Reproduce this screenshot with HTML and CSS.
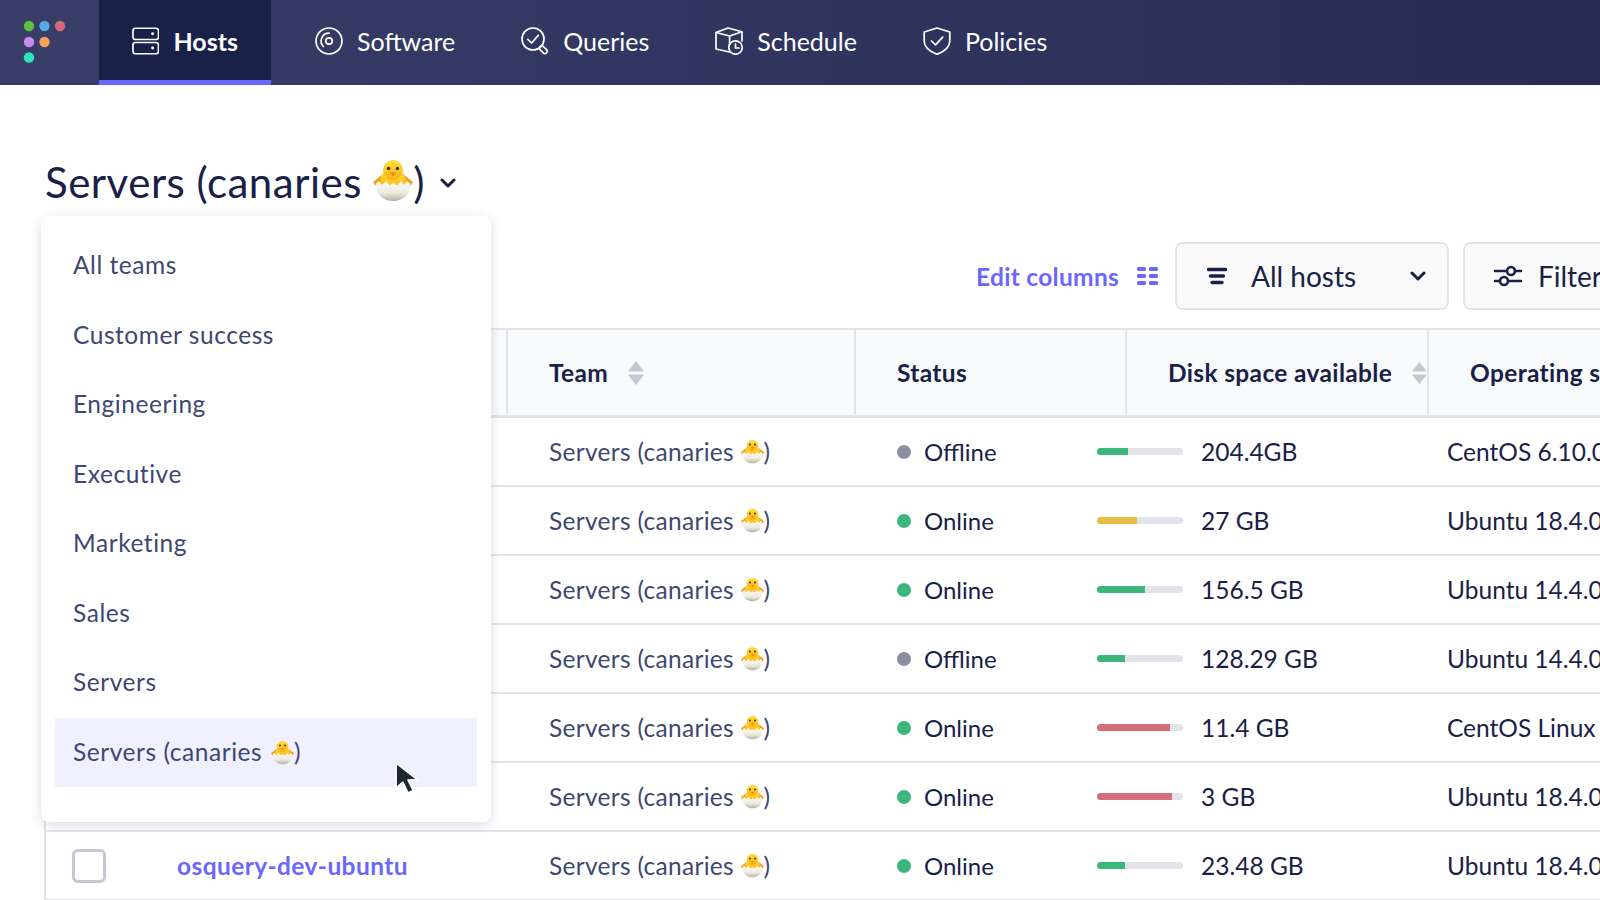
FILE: index.html
```html
<!DOCTYPE html>
<html lang="en">
<head>
  <meta charset="UTF-8" />
  <title>Manage hosts | Fleet</title>
  <link rel="stylesheet" href="styles.css">
</head>
<body>

<!-- shared emoji, used in title, menu and team column -->
<svg class="sprite" aria-hidden="true">
  <defs>
    <linearGradient id="eggShade" x1="0" y1="0" x2="0" y2="1">
      <stop offset="0" stop-color="#fdfcf6"/>
      <stop offset="0.6" stop-color="#ece9df"/>
      <stop offset="1" stop-color="#b5b0a0"/>
    </linearGradient>
    <linearGradient id="chickShade" x1="0" y1="0" x2="0" y2="1">
      <stop offset="0" stop-color="#ffe040"/>
      <stop offset="1" stop-color="#fcb10f"/>
    </linearGradient>
  </defs>
  <symbol id="chick" viewBox="0 0 40 41">
    <path d="M10 14 L0 22 L2.5 25.5 L11 27Z" fill="#f5a016"/>
    <path d="M30 14 L40 22 L37.5 25.5 L29 27Z" fill="#f5a016"/>
    <ellipse cx="20" cy="20" rx="12.5" ry="11" fill="url(#chickShade)"/>
    <circle cx="20" cy="10" r="10" fill="url(#chickShade)"/>
    <circle cx="15.6" cy="8.5" r="1.7" fill="#3a3028"/>
    <circle cx="24.4" cy="8.5" r="1.7" fill="#3a3028"/>
    <path d="M17 12.5 L23 12.5 L20 16.5Z" fill="#ef7d18"/>
    <path d="M3 23.5 L6 21 L9 25 L13 21 L17 25.5 L20 23 L24 25.5 L28 21 L31 25 L34 21 L37 23.5 C38 34 30 41 20 41 C10 41 2 34 3 23.5Z" fill="url(#eggShade)"/>
  </symbol>
</svg>

<nav class="topnav">
  <div class="logo">
    <svg width="54" height="52" viewBox="0 0 54 52">
      <circle cx="11" cy="9" r="5.2" fill="#5cc23d"/>
      <circle cx="26.5" cy="9" r="5.2" fill="#55a8e2"/>
      <circle cx="42" cy="9" r="5.2" fill="#d4697a"/>
      <circle cx="11" cy="25" r="5.2" fill="#c68cf0"/>
      <circle cx="26.5" cy="25" r="5.2" fill="#f8a05c"/>
      <circle cx="11" cy="40.5" r="5.2" fill="#2fe3bf"/>
    </svg>
  </div>
  <a class="nav-item active" href="#">
    <svg class="nav-icon" viewBox="0 0 28 28">
      <rect x="1" y="1" width="26" height="11.5" rx="2.5"/>
      <rect x="1" y="15.5" width="26" height="11.5" rx="2.5"/>
      <circle class="solid" cx="21" cy="6.7" r="1.5"/>
      <circle class="solid" cx="21" cy="21.2" r="1.5"/>
    </svg>
    Hosts
  </a>
  <a class="nav-item" href="#">
    <svg class="nav-icon" viewBox="0 0 28 28">
      <circle cx="14" cy="14" r="13"/>
      <circle cx="14" cy="14" r="3.2"/>
      <path d="M8.4 19.5 A7.8 7.8 0 0 1 14 6.2"/>
    </svg>
    Software
  </a>
  <a class="nav-item" href="#">
    <svg class="nav-icon" viewBox="0 0 28 28">
      <circle cx="12" cy="12" r="11"/>
      <path d="M6.8 12.3 L10.6 16 L17.3 8.4"/>
      <rect x="20" y="18.2" width="4.6" height="9" rx="2.3" transform="rotate(-45 22.3 22.7)"/>
    </svg>
    Queries
  </a>
  <a class="nav-item" href="#">
    <svg class="nav-icon" viewBox="0 0 28 28">
      <path d="M14.6 25 L1 22 V5.5 L13 1 L27 4.8 V14"/>
      <path d="M1 5.5 L14.6 9 L27 4.8 M14.6 9 V17"/>
      <circle cx="20.5" cy="20.5" r="6.7"/>
      <path d="M20.5 17 V21 H24"/>
    </svg>
    Schedule
  </a>
  <a class="nav-item" href="#">
    <svg class="nav-icon" viewBox="0 0 28 28">
      <path d="M14 1 L26.8 5 V14 C26.8 21 20 25 14 27.4 C8 25 1.2 21 1.2 14 V5Z"/>
      <path d="M8.5 14 L12.5 17.8 L19.7 10.2"/>
    </svg>
    Policies
  </a>
</nav>

<main class="page">
  <div class="team-picker">
    <h1 class="team-title">Servers (canaries <svg class="chick chick-lg"><use href="#chick"/></svg>)<svg class="title-caret" viewBox="0 0 16 11"><path d="M2 2 L8 8 L14 2"/></svg></h1>

    <ul class="team-menu">
      <li>All teams</li>
      <li>Customer success</li>
      <li>Engineering</li>
      <li>Executive</li>
      <li>Marketing</li>
      <li>Sales</li>
      <li>Servers</li>
      <li class="selected">
        Servers (canaries <svg class="chick"><use href="#chick"/></svg>)
        <svg class="cursor" viewBox="0 0 28 34">
          <path d="M3 2 L3 26 L9.5 20.5 L14.5 31 L19.5 28.5 L14.5 18.5 L23.5 18Z"/>
        </svg>
      </li>
    </ul>
  </div>

  <div class="toolbar">
    <a class="edit-columns" href="#">
      Edit columns
      <svg width="21" height="18" viewBox="0 0 21 18">
        <rect x="0" y="0" width="9" height="4" rx="1.5"/><rect x="12" y="0" width="9" height="4" rx="1.5"/>
        <rect x="0" y="7" width="9" height="4" rx="1.5"/><rect x="12" y="7" width="9" height="4" rx="1.5"/>
        <rect x="0" y="14" width="9" height="4" rx="1.5"/><rect x="12" y="14" width="9" height="4" rx="1.5"/>
      </svg>
    </a>
    <div class="tool-btn hosts-select">
      <svg class="tool-icon" viewBox="0 0 20 18">
        <path d="M1.5 2.5 H18.5 M3.5 9 H16.5 M5 15.5 H15"/>
      </svg>
      <span>All hosts</span>
      <svg class="select-caret" viewBox="0 0 16 11"><path d="M2 2 L8 8 L14 2"/></svg>
    </div>
    <div class="tool-btn filter-btn">
      <svg class="tool-icon sliders" viewBox="0 0 28 22">
        <path d="M1 6 H13 M21 6 H27 M1 16 H6 M14 16 H27"/>
        <circle cx="17" cy="6" r="4"/><circle cx="10" cy="16" r="4"/>
      </svg>
      <span>Filter</span>
    </div>
  </div>

  <div class="hosts-table">
    <div class="table-head">
      <div class="th"></div>
      <div class="th">Team <svg class="sort" viewBox="0 0 16 24"><path d="M8 0 L16 10.5 H0Z M0 13.5 H16 L8 24Z"/></svg></div>
      <div class="th">Status</div>
      <div class="th">Disk space available <svg class="sort" viewBox="0 0 16 24"><path d="M8 0 L16 10.5 H0Z M0 13.5 H16 L8 24Z"/></svg></div>
      <div class="th">Operating system</div>
    </div>

    <div class="row">
      <div class="cell"></div>
      <div class="cell team">Servers (canaries <svg class="chick"><use href="#chick"/></svg>)</div>
      <div class="cell status"><i class="dot offline"></i>Offline</div>
      <div class="cell disk"><div class="bar"><div class="fill green" style="width:36%"></div></div>204.4GB</div>
      <div class="cell">CentOS 6.10.0</div>
    </div>
    <div class="row">
      <div class="cell"></div>
      <div class="cell team">Servers (canaries <svg class="chick"><use href="#chick"/></svg>)</div>
      <div class="cell status"><i class="dot online"></i>Online</div>
      <div class="cell disk"><div class="bar"><div class="fill yellow" style="width:46%"></div></div>27 GB</div>
      <div class="cell">Ubuntu 18.4.0</div>
    </div>
    <div class="row">
      <div class="cell"></div>
      <div class="cell team">Servers (canaries <svg class="chick"><use href="#chick"/></svg>)</div>
      <div class="cell status"><i class="dot online"></i>Online</div>
      <div class="cell disk"><div class="bar"><div class="fill green" style="width:56%"></div></div>156.5 GB</div>
      <div class="cell">Ubuntu 14.4.0</div>
    </div>
    <div class="row">
      <div class="cell"></div>
      <div class="cell team">Servers (canaries <svg class="chick"><use href="#chick"/></svg>)</div>
      <div class="cell status"><i class="dot offline"></i>Offline</div>
      <div class="cell disk"><div class="bar"><div class="fill green" style="width:33%"></div></div>128.29 GB</div>
      <div class="cell">Ubuntu 14.4.0</div>
    </div>
    <div class="row">
      <div class="cell"></div>
      <div class="cell team">Servers (canaries <svg class="chick"><use href="#chick"/></svg>)</div>
      <div class="cell status"><i class="dot online"></i>Online</div>
      <div class="cell disk"><div class="bar"><div class="fill red" style="width:85%"></div></div>11.4 GB</div>
      <div class="cell">CentOS Linux 7</div>
    </div>
    <div class="row">
      <div class="cell"></div>
      <div class="cell team">Servers (canaries <svg class="chick"><use href="#chick"/></svg>)</div>
      <div class="cell status"><i class="dot online"></i>Online</div>
      <div class="cell disk"><div class="bar"><div class="fill red" style="width:87%"></div></div>3 GB</div>
      <div class="cell">Ubuntu 18.4.0</div>
    </div>
    <div class="row">
      <div class="cell host"><span class="checkbox"></span><a href="#">osquery-dev-ubuntu</a></div>
      <div class="cell team">Servers (canaries <svg class="chick"><use href="#chick"/></svg>)</div>
      <div class="cell status"><i class="dot online"></i>Online</div>
      <div class="cell disk"><div class="bar"><div class="fill green" style="width:33%"></div></div>23.48 GB</div>
      <div class="cell">Ubuntu 18.4.0</div>
    </div>
  </div>
</main>

</body>
</html>
```

FILE: styles.css
```css
* {
  box-sizing: border-box;
}

html, body {
  height: 100%;
}

body {
  margin: 0;
  overflow: hidden;
  background: #fff;
  color: #192147;
  font-family: 'Lato', 'Noto Sans', sans-serif;
}

.sprite {
  position: absolute;
  width: 0;
  height: 0;
}

/* top navigation */
.topnav {
  display: flex;
  height: 85px;
  background: linear-gradient(90deg, #383e68, #282c55);
}

.logo {
  width: 99px;
  padding: 17px 0 0 18px;
}

.nav-item {
  display: flex;
  align-items: center;
  gap: 14px;
  padding: 0 33px 3px;
  color: #fff;
  font-size: 25px;
  text-decoration: none;
}

.nav-item.active {
  width: 172px;
  margin-right: 11px;
  padding-top: 2px;
  padding-bottom: 0;
  background: #1a2149;
  border-bottom: 5px solid #6a67fe;
  font-weight: 700;
}

.nav-icon {
  width: 28px;
  height: 28px;
  fill: none;
  stroke: #fff;
  stroke-width: 1.7;
  stroke-linecap: round;
  stroke-linejoin: round;
}

.nav-icon .solid {
  fill: #fff;
  stroke: none;
}

/* page */
.page {
  padding: 67px 0 0 44px;
}

.team-picker {
  position: relative;
}

.team-title {
  height: 60px;
  margin: 0;
  padding-left: 1px;
  font-size: 42px;
  font-weight: 400;
  line-height: 60px;
  letter-spacing: 0.5px;
  white-space: nowrap;
}

.chick {
  display: inline-block;
  width: 23px;
  height: 25px;
  vertical-align: -4px;
}

.chick-lg {
  width: 40px;
  height: 41px;
  vertical-align: -3px;
}

.title-caret {
  width: 16px;
  height: 11px;
  margin-left: 15px;
  vertical-align: 9px;
  fill: none;
  stroke: #192147;
  stroke-width: 3;
  stroke-linecap: round;
  stroke-linejoin: round;
}

/* team dropdown */
.team-menu {
  position: absolute;
  top: 64px;
  left: -3px;
  z-index: 5;
  width: 450px;
  margin: 0;
  padding: 15px 14px 35px;
  list-style: none;
  background: #fff;
  border-radius: 8px;
  box-shadow: 0 3px 12px rgba(25, 33, 71, 0.16);
}

.team-menu li {
  position: relative;
  height: 69.5px;
  padding-left: 18px;
  color: #3e4771;
  font-size: 24.5px;
  line-height: 67px;
  letter-spacing: 0.55px;
}

.team-menu li.selected {
  background: #f1f0ff;
}

.team-menu .chick {
  margin-left: 2px;
}

.cursor {
  position: absolute;
  top: 43px;
  left: 338px;
  width: 29px;
  height: 35px;
  fill: #1c2733;
  stroke: #fff;
  stroke-width: 1.5;
  stroke-linejoin: round;
}

/* toolbar above the table */
.toolbar {
  display: flex;
  align-items: center;
  height: 68px;
  margin-top: 30px;
  margin-bottom: 18px;
  padding-left: 932px;
  width: 1800px;
}

.edit-columns {
  display: flex;
  align-items: center;
  gap: 18px;
  width: 199px;
  color: #6a67fe;
  fill: #6a67fe;
  font-size: 24.5px;
  font-weight: 700;
  letter-spacing: 0.3px;
  text-decoration: none;
}

.tool-btn {
  display: flex;
  align-items: center;
  height: 68px;
  background: #fafafb;
  border: 2px solid #e2e4ea;
  border-radius: 8px;
  font-size: 28px;
}

.hosts-select {
  width: 274px;
  margin-right: 14px;
  padding-left: 30px;
}

.filter-btn {
  width: 230px;
  padding-left: 29px;
}

.tool-icon {
  flex: none;
  width: 20px;
  height: 18px;
  margin-right: 24px;
  fill: none;
  stroke: #192147;
  stroke-width: 3.4;
  stroke-linecap: round;
}

.tool-icon.sliders {
  width: 28px;
  height: 22px;
  margin-right: 16px;
  stroke-width: 2.6;
}

.select-caret {
  width: 16px;
  height: 11px;
  margin-left: auto;
  margin-right: 21px;
  fill: none;
  stroke: #192147;
  stroke-width: 3;
  stroke-linecap: round;
  stroke-linejoin: round;
}

/* hosts table */
.hosts-table {
  width: 1700px;
  border-left: 2px solid #e2e4ea;
}

.table-head {
  display: grid;
  grid-template-columns: 460px 348px 271px 302px 1fr;
  height: 90px;
  background: #f9fafc;
  border-top: 2px solid #e2e4ea;
  border-bottom: 3px solid #e2e4ea;
}

.th {
  display: flex;
  align-items: center;
  gap: 20px;
  padding-left: 41px;
  font-size: 24.5px;
  font-weight: 700;
  letter-spacing: 0.35px;
  white-space: nowrap;
  border-left: 2px solid #e2e4ea;
}

.th:first-child {
  border-left: none;
}

.sort {
  width: 16px;
  height: 24px;
  fill: #c5c7d1;
}

.row {
  display: grid;
  grid-template-columns: 461px 348px 242px 350px 1fr;
  height: 69px;
  border-bottom: 2px solid #e2e4ea;
}

.cell {
  display: flex;
  align-items: center;
  font-size: 24.5px;
  white-space: pre;
}

.cell.team {
  padding-left: 42px;
  color: #3e4771;
  letter-spacing: 0.3px;
}

.cell.status {
  padding-left: 42px;
  font-size: 24px;
}

.cell.host {
  padding-left: 26px;
}

.cell.host a {
  color: #6a67fe;
  font-weight: 700;
  letter-spacing: 0.4px;
  text-decoration: none;
}

.checkbox {
  width: 34px;
  height: 34px;
  margin-right: 71px;
  border: 3px solid #c5c7d1;
  border-radius: 6px;
}

.dot {
  width: 14px;
  height: 14px;
  margin-right: 13px;
  border-radius: 50%;
}

.dot.online {
  background: #3db67b;
}

.dot.offline {
  background: #8b8fa2;
}

.bar {
  width: 86px;
  height: 7px;
  margin-right: 18px;
  background: #e2e4ea;
  border-radius: 4px;
  overflow: hidden;
}

.fill {
  height: 100%;
}

.fill.green {
  background: #3db67b;
}

.fill.yellow {
  background: #ebbc43;
}

.fill.red {
  background: #d66c7b;
}
```
